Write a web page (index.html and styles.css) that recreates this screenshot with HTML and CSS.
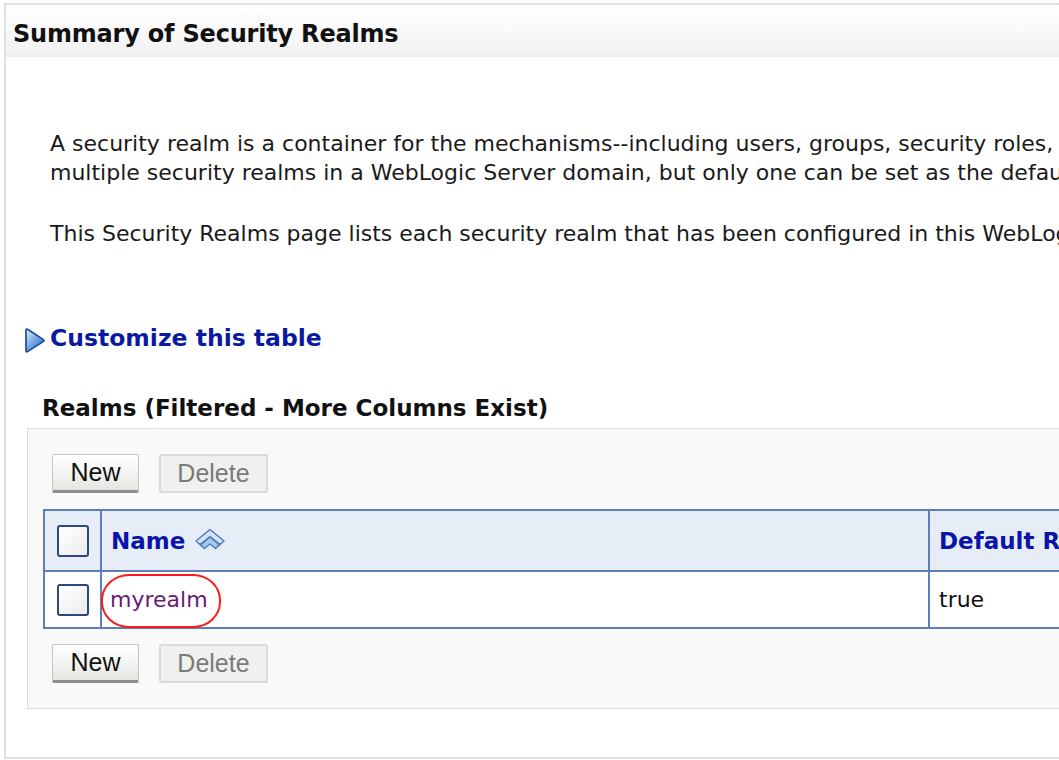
FILE: index.html
```html
<!DOCTYPE html>
<html>
<head>
<meta charset="utf-8">
<link rel="stylesheet" href="styles.css">
</head>
<body>
<div class="frame">
  <div class="titlebar">Summary of Security Realms</div>
  <div class="content">
    <p class="intro">A security realm is a container for the mechanisms--including users, groups, security roles,<br>multiple security realms in a WebLogic Server domain, but only one can be set as the default</p>
    <p class="intro second">This Security Realms page lists each security realm that has been configured in this WebLogic</p>

    <div class="customize">
      <svg class="tri" width="22" height="27" viewBox="0 0 22 27">
        <defs>
          <linearGradient id="tg" x1="0" y1="0" x2="1" y2="1">
            <stop offset="0" stop-color="#e3efff"/>
            <stop offset="0.45" stop-color="#7aaee9"/>
            <stop offset="1" stop-color="#2459b0"/>
          </linearGradient>
        </defs>
        <path d="M3.5 2.2 Q2 1.6 2 3.4 L2 23.6 Q2 25.4 3.5 24.6 L19.2 14.6 Q20.6 13.5 19.2 12.4 Z" fill="url(#tg)" stroke="#1d4b98" stroke-width="1.7" stroke-linejoin="round"/>
      </svg>
      <span class="customize-link">Customize this table</span>
    </div>

    <div class="table-title">Realms (Filtered - More Columns Exist)</div>

    <div class="panel">
      <div class="btns">
        <span class="btn">New</span>
        <span class="btn disabled">Delete</span>
      </div>
      <table class="grid">
        <tr class="head">
          <th class="sel"><span class="cb"></span></th>
          <th class="name-col">Name<svg class="sort" width="32" height="24" viewBox="0 0 32 24">
              <path d="M16 1.5 L30 13 L26 16.5 L16 8.5 L6 16.5 L2 13 Z" fill="#d6e5f7" stroke="#4f80c0" stroke-width="1.6" stroke-linejoin="round"/>
              <path d="M16 9 L25.5 16.8 L21.5 20.5 L16 16 L10.5 20.5 L6.5 16.8 Z" fill="#aac7ec" stroke="#4f80c0" stroke-width="1.6" stroke-linejoin="round"/>
            </svg></th>
          <th class="def-col">Default Realm</th>
        </tr>
        <tr class="row">
          <td class="sel"><span class="cb"></span></td>
          <td class="name-cell"><span class="realm-link">myrealm</span><span class="circle"></span></td>
          <td class="def-cell">true</td>
        </tr>
      </table>
      <div class="btns bottom">
        <span class="btn">New</span>
        <span class="btn disabled">Delete</span>
      </div>
    </div>
  </div>
</div>
</body>
</html>
```

FILE: styles.css
```css
html, body {
  margin: 0;
  padding: 0;
  background: #ffffff;
}
body {
  width: 1059px;
  height: 760px;
  overflow: hidden;
  font-family: "DejaVu Sans", sans-serif;
  color: #1a1a1a;
}
.frame {
  margin: 3px 0 0 4px;
  width: 1100px;
  height: 756px;
  box-sizing: border-box;
  border: 2px solid #dde1e5;
  border-right: none;
  overflow: hidden;
}
.titlebar {
  height: 52px;
  box-sizing: border-box;
  padding: 3px 0 0 7px;
  line-height: 52px;
  font-weight: bold;
  font-size: 24px;
  color: #111;
  background: linear-gradient(#ffffff 0%, #fbfbfb 40%, #f1f1f1 100%);
  border-bottom: 2px solid #ececec;
  letter-spacing: -0.2px;
}
.intro {
  margin: 72px 0 0 44px;
  font-size: 22px;
  line-height: 29px;
  white-space: nowrap;
}
.intro.second {
  margin-top: 32px;
}
.customize {
  display: flex;
  align-items: center;
  gap: 4px;
  margin: 75px 0 0 18px;
  height: 30px;
}
.tri {
  flex: none;
  margin-top: 4px;
}
.customize-link {
  font-weight: bold;
  font-size: 23.5px;
  color: #0a1aa0;
}
.table-title {
  margin: 40px 0 0 36px;
  height: 30px;
  line-height: 30px;
  font-weight: bold;
  font-size: 23px;
  color: #111;
}
.panel {
  margin: 5px 0 0 21px;
  width: 1100px;
  height: 281px;
  box-sizing: border-box;
  border: 1px solid #dcdcdc;
  background: #f9f9f9;
  padding: 25px 0 0 24px;
}
.btns {
  display: flex;
  gap: 20px;
  height: 39px;
}
.btns.bottom {
  margin-top: 15px;
}
.btn {
  display: inline-flex;
  align-items: center;
  justify-content: center;
  box-sizing: border-box;
  height: 39px;
  width: 87px;
  font-family: "Liberation Sans", Arial, sans-serif;
  font-size: 25px;
  color: #111;
  background: linear-gradient(#ffffff, #f4f4f2 50%, #e4e4e0);
  border: 1px solid #c4c4c4;
  border-bottom: 3px solid #8e8e8e;
  border-radius: 2px;
}
.btn.disabled {
  width: 109px;
  color: #7a7a7a;
  background: #f0f0ee;
  border: 2px solid #dadad8;
}
.grid {
  margin: 16px 0 0 -9px;
  border-collapse: collapse;
  border: 2px solid #5b7fb6;
  width: 1060px;
  table-layout: fixed;
}
.grid th, .grid td {
  border: 2px solid #5b7fb6;
  padding: 0;
  text-align: left;
  white-space: nowrap;
  overflow: hidden;
}
.head th {
  height: 59px;
  background: #e6edf7;
  font-weight: bold;
  font-size: 23px;
  color: #0a14a8;
}
.row td {
  height: 55px;
  background: #ffffff;
  font-size: 22px;
}
.sel {
  width: 55px;
  text-align: center !important;
}
.name-col {
  width: 817px;
  padding-left: 9px !important;
}
.name-col .sort {
  vertical-align: -3px;
  margin-left: 9px;
}
.def-col, .def-cell {
  padding-left: 9px !important;
}
.cb {
  display: inline-block;
  width: 28px;
  height: 28px;
  border: 2px solid #2a4a7c;
  border-radius: 3px;
  background: linear-gradient(135deg, #ffffff, #ececec);
  vertical-align: middle;
}
.name-cell {
  position: relative;
  padding-left: 8px !important;
  overflow: visible !important;
}
.realm-link {
  color: #6a1a73;
}
.circle {
  position: absolute;
  left: -1px;
  top: 2px;
  width: 120px;
  height: 54px;
  box-sizing: border-box;
  border: 2px solid #ff1a1a;
  border-radius: 28px / 26px;
}
.def-cell {
  color: #111;
}
```
